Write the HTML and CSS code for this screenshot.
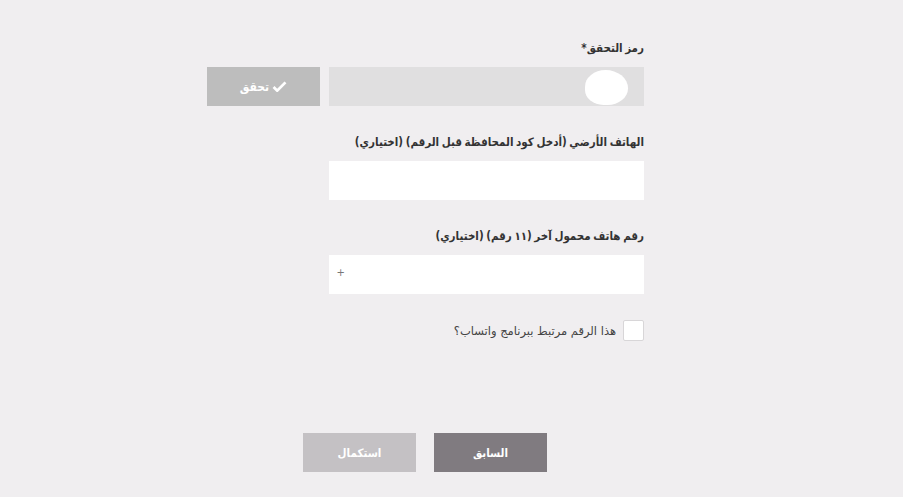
FILE: index.html
```html
<!DOCTYPE html>
<html lang="ar" dir="rtl">
<head>
<meta charset="utf-8">
<link rel="stylesheet" href="styles.css">
</head>
<body>
<div class="form">
  <div class="field">
    <label class="label">رمز التحقق*</label>
    <div class="row">
      <div class="input input-gray"><span class="blob"></span></div>
      <button class="verify"><svg class="check" viewBox="0 0 16 12" width="15" height="11"><path d="M1.5 6.5 L5.5 10.5 L14.5 1.5" fill="none" stroke="#fff" stroke-width="3"/></svg><span>تحقق</span></button>
    </div>
  </div>
  <div class="field">
    <label class="label">الهاتف الأرضي (أدخل كود المحافظة قبل الرقم) (اختياري)</label>
    <div class="input"></div>
  </div>
  <div class="field">
    <label class="label">رقم هاتف محمول آخر (١١ رقم) (اختياري)</label>
    <div class="input"><span class="plus">+</span></div>
  </div>
  <div class="check-row">
    <span class="box"></span>
    <span class="check-text">هذا الرقم مرتبط ببرنامج واتساب؟</span>
  </div>
  <div class="actions">
    <button class="btn btn-prev">السابق</button>
    <button class="btn btn-next">استكمال</button>
  </div>
</div>
</body>
</html>
```
FILE: styles.css
```css
html, body {
  margin: 0;
  padding: 0;
  background: #f0eef0;
  font-family: "DejaVu Sans", sans-serif;
}
.form {
  width: 438px;
  margin-right: 259px;
  padding-top: 39px;
  display: flex;
  flex-direction: column;
}
.field {
  display: flex;
  flex-direction: column;
  margin-bottom: 27px;
}
.label {
  font-family: "DejaVu Sans Condensed", "DejaVu Sans", sans-serif;
  font-size: 11.5px;
  font-weight: bold;
  color: #333;
  line-height: 18px;
  margin-bottom: 10px;
  letter-spacing: -0.4px;
  word-spacing: -1px;
}
.row {
  display: flex;
  gap: 9px;
}
.input {
  width: 315px;
  height: 39px;
  background: #fff;
  position: relative;
}
.input-gray {
  background: #e0dfe0;
}
.blob {
  position: absolute;
  right: 16px;
  top: 3px;
  width: 43px;
  height: 35px;
  background: #fff;
  border-radius: 50% 55% 50% 45%;
}
.plus {
  position: absolute;
  right: 299px;
  top: 12px;
  font-size: 10px;
  color: #777;
}
.verify {
  width: 113px;
  height: 39px;
  border: none;
  background: #bdbdbd;
  color: #fff;
  font-family: "DejaVu Sans Condensed", "DejaVu Sans", sans-serif;
  font-size: 12px;
  font-weight: bold;
  display: flex;
  align-items: center;
  justify-content: center;
  gap: 3px;
  padding: 0;
}
.check-row {
  display: flex;
  align-items: center;
  gap: 7px;
  margin-top: -1px;
}
.box {
  width: 19px;
  height: 19px;
  background: #fff;
  border: 1px solid #d8d6d8;
  border-radius: 2px;
}
.check-text {
  font-size: 11.5px;
  color: #444;
}
.actions {
  display: flex;
  justify-content: center;
  gap: 18px;
  margin-top: 92px;
}
.btn {
  width: 113px;
  height: 39px;
  border: none;
  color: #fff;
  font-family: "DejaVu Sans Condensed", "DejaVu Sans", sans-serif;
  font-size: 11.5px;
  font-weight: bold;
  padding: 0;
}
.btn-prev {
  background: #807b80;
}
.btn-next {
  background: #c4c1c4;
}
```
